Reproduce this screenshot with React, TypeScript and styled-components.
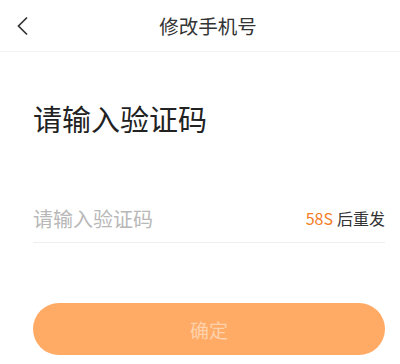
import styled, { createGlobalStyle } from "styled-components";

const Global = createGlobalStyle`
  body {
    margin: 0;
    background: #fff;
    font-family: "Noto Sans CJK SC", "Noto Sans", sans-serif;
  }
`;

const Page = styled.div`
  width: 400px;
  height: 364px;
  overflow: hidden;
  background: #fff;
`;

const Header = styled.header`
  height: 51px;
  border-bottom: 1px solid #f2f2f2;
  display: grid;
  grid-template-columns: 60px 1fr 44px;
  align-items: center;
`;

const Back = styled.button`
  border: 0;
  background: none;
  padding: 0 0 0 16px;
  height: 100%;
  display: flex;
  align-items: center;
  cursor: pointer;
`;

const Title = styled.h1`
  margin: 0;
  text-align: center;
  font-size: 19.5px;
  font-weight: 400;
  color: #333;
`;

const Body = styled.main`
  padding: 0 15px 0 33px;
`;

const Heading = styled.h2`
  margin: 46px 0 0;
  font-size: 29px;
  line-height: 40px;
  font-weight: 400;
  color: #222;
`;

const Field = styled.div`
  margin-top: 58px;
  height: 44px;
  border-bottom: 1px solid #eeeeee;
  display: flex;
  align-items: center;
  justify-content: space-between;
  padding-bottom: 2px;
`;

const Input = styled.input`
  border: 0;
  outline: none;
  flex: 1;
  min-width: 0;
  font-family: inherit;
  font-size: 20px;
  color: #333;
  padding: 0;
  background: transparent;
  &::placeholder {
    color: #b8b8b8;
  }
`;

const Resend = styled.span`
  font-size: 16px;
  color: #333;
  white-space: nowrap;
`;

const Count = styled.span`
  color: #f47c26;
  margin-right: 4px;
`;

const Submit = styled.button`
  margin-top: 60px;
  width: 100%;
  height: 52px;
  border: 0;
  border-radius: 26px;
  background: #ffab66;
  color: #ffd2ac;
  font-family: inherit;
  font-size: 19px;
  cursor: pointer;
`;

export default function App() {
  return (
    <Page>
      <Global />
      <Header>
        <Back aria-label="返回">
          <svg width="13" height="20" viewBox="0 0 13 20" fill="none">
            <path d="M11 1.5 2.5 10l8.5 8.5" stroke="#333" strokeWidth="1.7" />
          </svg>
        </Back>
        <Title>修改手机号</Title>
        <span />
      </Header>
      <Body>
        <Heading>请输入验证码</Heading>
        <Field>
          <Input placeholder="请输入验证码" />
          <Resend>
            <Count>58S</Count>后重发
          </Resend>
        </Field>
        <Submit>确定</Submit>
      </Body>
    </Page>
  );
}
